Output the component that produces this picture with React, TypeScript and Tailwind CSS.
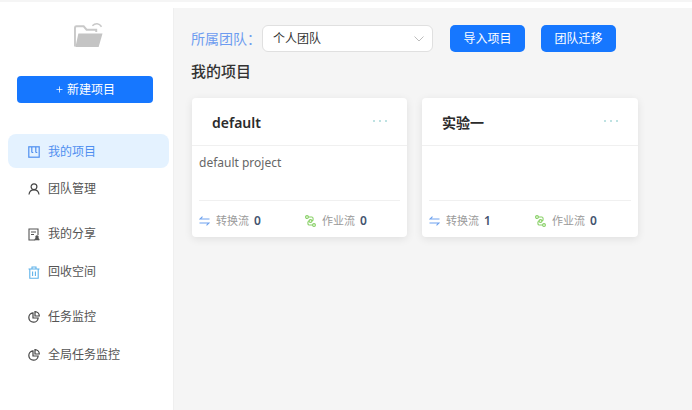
import { ReactNode } from "react";
import { Plus } from "lucide-react";

const font = "font-['Noto_Sans','Noto_Sans_CJK_SC',sans-serif]";

function FolderLogo() {
  return (
    <svg width="29" height="28" viewBox="0 0 30 28" fill="none">
      <path d="M1 26V6.500C1 5.700 1.700 5 2.500 5H10l3 3.500h10V11" stroke="#c9c9c9" strokeWidth="2" />
      <path d="M4.500 12.500H29.500L25.500 26.500H1.500Z" fill="#c4c4c4" />
      <path d="M19 4.500C22 1.500 26 1.500 28.500 5.500" stroke="#c9c9c9" strokeWidth="1.6" />
    </svg>
  );
}

function BoardIcon() {
  return (
    <svg width="12" height="12" viewBox="0 0 12 12" fill="none" stroke="#4f8ff0" strokeWidth="1.2">
      <rect x="0.8" y="0.8" width="10.4" height="10.4" />
      <path d="M3.800 1v5.500M7.800 1v5.500M3.800 6.500h1.500M7.800 6.500h1.500" />
    </svg>
  );
}

function UserIcon() {
  return (
    <svg width="12" height="12" viewBox="0 0 12 12" fill="none" stroke="#444" strokeWidth="1.2">
      <circle cx="6" cy="3.800" r="2.900" />
      <path d="M1 11.500C1.300 8.800 3 6.900 6 6.900s4.700 1.900 5 4.600" />
    </svg>
  );
}

function ShareIcon() {
  return (
    <svg width="12" height="13" viewBox="0 0 12 13" fill="none" stroke="#555" strokeWidth="1.1">
      <path d="M7 12H1V1h9v6" />
      <path d="M3 4h5M3 6.500h3" />
      <circle cx="9" cy="9" r="1.200" fill="#555" />
      <path d="M6.800 12.200c.2-1.200 1-1.800 2.200-1.800s2 .6 2.200 1.800" fill="#555" />
    </svg>
  );
}

function TrashIcon() {
  return (
    <svg width="12" height="13" viewBox="0 0 12 13" fill="none" stroke="#5eb2ea" strokeWidth="1.1">
      <path d="M.5 3h11M4 3V1h4v2M1.800 3v9.300h8.400V3" />
      <path d="M4.600 5.500v4.500M7.400 5.500v4.500" />
    </svg>
  );
}

function PieIcon() {
  return (
    <svg width="12" height="12" viewBox="0 0 12 12" fill="none" stroke="#444" strokeWidth="1.2">
      <path d="M5 1.800A4.700 4.700 0 1 0 10.200 7H5Z" />
      <path d="M7 .7A4.400 4.400 0 0 1 11.300 5H7Z" />
    </svg>
  );
}

function SwapIcon() {
  return (
    <svg width="11" height="10" viewBox="0 0 11 10" fill="none" stroke="#6ea2ef" strokeWidth="1.1">
      <path d="M10.500 3H1L3.500.6" />
      <path d="M.5 7H10L7.500 9.400" />
    </svg>
  );
}

function FlowIcon() {
  return (
    <svg width="11" height="12" viewBox="0 0 11 12" fill="none" stroke="#85cf62" strokeWidth="1.1">
      <circle cx="2" cy="2" r="1.400" />
      <circle cx="5.500" cy="6" r="1.400" />
      <circle cx="9" cy="10" r="1.400" />
      <path d="M3.400 2H7c1.500 0 1.500 4 0 4M4 6C2.500 6 2.500 10 4 10h3.600" />
    </svg>
  );
}

function NavItem({ icon, label, active, className }: { icon: ReactNode; label: string; active?: boolean; className?: string }) {
  return (
    <div
      className={`flex h-[34px] items-center gap-[8px] rounded-[8px] pl-[20px] pt-[2px] text-[12px] ${
        active ? "bg-[#e4f2ff] text-[#4f8ff0]" : "text-[#555]"
      } ${className ?? ""}`}
    >
      <span className="flex w-[12px] justify-center">{icon}</span>
      {label}
    </div>
  );
}

function ProjectCard({ title, desc, convert, job, width }: { title: string; desc?: string; convert: number; job: number; width: string }) {
  return (
    <div className={`flex h-[139px] flex-col rounded-[4px] bg-white shadow-[0_2px_8px_rgba(0,0,0,0.09)] ${width}`}>
      <div className="flex h-[48px] items-center justify-between border-b border-[#f0f0f0] pl-[20px] pr-[20px] pt-[2px]">
        <span className="text-[14px] font-semibold text-[#2b2b2b]">{title}</span>
        <span className="flex gap-[4px] pb-[4px]">
          <i className="size-[2px] rounded-full bg-[#a9d8d8]" />
          <i className="size-[2px] rounded-full bg-[#a9d8d8]" />
          <i className="size-[2px] rounded-full bg-[#a9d8d8]" />
        </span>
      </div>
      <div className="h-[54px] px-[7px] pt-[8px] text-[12px] leading-[17px] text-[#666]">{desc}</div>
      <div className="mx-[7px] flex flex-1 items-center border-t border-[#f0f0f0] pt-[4px] text-[11px]">
        <div className="flex w-[106px] items-center">
          <SwapIcon />
          <span className="ml-[6px] text-[#9a9a9a]">转换流</span>
          <span className="ml-[5px] text-[12px] font-semibold text-[#44546f]">{convert}</span>
        </div>
        <div className="flex items-center">
          <FlowIcon />
          <span className="ml-[6px] text-[#9a9a9a]">作业流</span>
          <span className="ml-[5px] text-[12px] font-semibold text-[#44546f]">{job}</span>
        </div>
      </div>
    </div>
  );
}

export default function App() {
  return (
    <div className={`flex h-[410px] w-[692px] flex-col overflow-hidden bg-white ${font}`}>
      <div className="h-[2px] bg-[#f5f5f5]" />
      <div className="flex flex-1">
        <aside className="flex w-[173px] flex-col bg-white">
          <div className="flex justify-center pl-[4px] pt-[19px]">
            <FolderLogo />
          </div>
          <button className="ml-[17px] mt-[27px] flex h-[27px] w-[136px] items-center justify-center gap-[3px] rounded-[4px] bg-[#1677ff] text-[12px] text-white">
            <Plus size={9} />
            新建项目
          </button>
          <nav className="ml-[8px] mr-[4px] mt-[31px] flex flex-col">
            <NavItem active icon={<BoardIcon />} label="我的项目" />
            <NavItem className="mt-[3px]" icon={<UserIcon />} label="团队管理" />
            <NavItem className="mt-[11px]" icon={<ShareIcon />} label="我的分享" />
            <NavItem className="mt-[4px]" icon={<TrashIcon />} label="回收空间" />
            <NavItem className="mt-[11px]" icon={<PieIcon />} label="任务监控" />
            <NavItem className="mt-[4px]" icon={<PieIcon />} label="全局任务监控" />
          </nav>
        </aside>
        <main className="mt-[6px] flex-1 border-l border-[#efefef] bg-[#f5f5f5] pl-[17px]">
          <div className="mt-[17px] flex items-center">
            <span className="w-[71px] text-[14px] text-[#6d9cf0]">所属团队：</span>
            <div className="flex h-[27px] w-[171px] items-center justify-between rounded-[6px] border border-[#e0e0e0] bg-white pl-[10px] pr-[8px] text-[12px] text-[#333]">
              个人团队
              <svg width="10" height="6" viewBox="0 0 10 6" fill="none" stroke="#bdbdbd" strokeWidth="1">
                <path d="M.5.5 5 5 9.500.5" />
              </svg>
            </div>
            <button className="ml-[17px] h-[27px] w-[75px] rounded-[5px] bg-[#1677ff] text-[12px] text-white">导入项目</button>
            <button className="ml-[16px] h-[27px] w-[75px] rounded-[5px] bg-[#1677ff] text-[12px] text-white">团队迁移</button>
          </div>
          <h2 className="mt-[8px] text-[15px] leading-[22px] font-medium text-[#333]">我的项目</h2>
          <div className="ml-[1px] mt-[16px] flex gap-[15px]">
            <ProjectCard width="w-[215px]" title="default" desc="default project" convert={0} job={0} />
            <ProjectCard width="w-[216px]" title="实验一" convert={1} job={0} />
          </div>
        </main>
      </div>
    </div>
  );
}
